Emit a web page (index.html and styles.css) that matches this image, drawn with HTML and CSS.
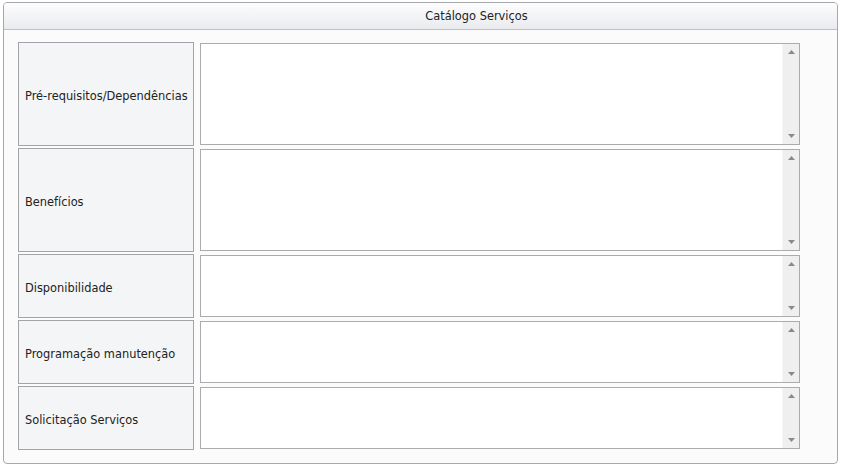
FILE: index.html
```html
<!DOCTYPE html>
<html lang="pt">
<head>
<meta charset="utf-8">
<title>Catálogo Serviços</title>
<link rel="stylesheet" href="styles.css">
</head>
<body>
<div class="panel">
  <div class="panel-header">Catálogo Serviços</div>
  <div class="panel-body">
    <div class="form">
      <div class="label tall">Pré-requisitos/Dependências</div>
      <div class="field tall-field"><div class="area"></div><div class="scroll"><svg class="arr" width="7" height="4" viewBox="0 0 7 4"><path d="M0 4 L3.5 0 L7 4 Z" fill="#8a8a8a"/></svg><svg class="arr" width="7" height="4" viewBox="0 0 7 4"><path d="M0 0 L3.5 4 L7 0 Z" fill="#8a8a8a"/></svg></div></div>

      <div class="label tall">Benefícios</div>
      <div class="field tall-field"><div class="area"></div><div class="scroll"><svg class="arr" width="7" height="4" viewBox="0 0 7 4"><path d="M0 4 L3.5 0 L7 4 Z" fill="#8a8a8a"/></svg><svg class="arr" width="7" height="4" viewBox="0 0 7 4"><path d="M0 0 L3.5 4 L7 0 Z" fill="#8a8a8a"/></svg></div></div>

      <div class="label short">Disponibilidade</div>
      <div class="field short-field"><div class="area"></div><div class="scroll"><svg class="arr" width="7" height="4" viewBox="0 0 7 4"><path d="M0 4 L3.5 0 L7 4 Z" fill="#8a8a8a"/></svg><svg class="arr" width="7" height="4" viewBox="0 0 7 4"><path d="M0 0 L3.5 4 L7 0 Z" fill="#8a8a8a"/></svg></div></div>

      <div class="label short">Programação manutenção</div>
      <div class="field short-field"><div class="area"></div><div class="scroll"><svg class="arr" width="7" height="4" viewBox="0 0 7 4"><path d="M0 4 L3.5 0 L7 4 Z" fill="#8a8a8a"/></svg><svg class="arr" width="7" height="4" viewBox="0 0 7 4"><path d="M0 0 L3.5 4 L7 0 Z" fill="#8a8a8a"/></svg></div></div>

      <div class="label short">Solicitação Serviços</div>
      <div class="field short-field"><div class="area"></div><div class="scroll"><svg class="arr" width="7" height="4" viewBox="0 0 7 4"><path d="M0 4 L3.5 0 L7 4 Z" fill="#8a8a8a"/></svg><svg class="arr" width="7" height="4" viewBox="0 0 7 4"><path d="M0 0 L3.5 4 L7 0 Z" fill="#8a8a8a"/></svg></div></div>
    </div>
  </div>
</div>
</body>
</html>
```
FILE: styles.css
```css
html, body {
  margin: 0;
  padding: 0;
  background: #ffffff;
}
body {
  font-family: "DejaVu Sans", Verdana, sans-serif;
  font-size: 11.4px;
  color: #222222;
}
.panel {
  box-sizing: border-box;
  margin: 2px 0 0 3px;
  width: 835px;
  height: 462px;
  border: 1px solid #a6a8ab;
  border-radius: 4px;
  background: #fbfbfc;
  overflow: hidden;
}
.panel-header {
  box-sizing: border-box;
  height: 27px;
  border-bottom: 1px solid #bcbfc3;
  background: linear-gradient(to bottom, #fdfdfe 0%, #f3f4f6 50%, #e9ebee 100%);
  display: flex;
  align-items: center;
  justify-content: center;
  padding-left: 112px;
  padding-bottom: 1px;
}
.panel-body {
  padding: 12px 0 0 14px;
}
.form {
  display: grid;
  grid-template-columns: 176px 600px;
  column-gap: 6px;
  row-gap: 2px;
}
.label {
  box-sizing: border-box;
  border: 1px solid #a2a4a7;
  background: #f4f5f7;
  padding: 3px 6px 0 6px;
  display: flex;
  align-items: center;
  white-space: nowrap;
}
.tall { height: 104px; }
.short { height: 64px; }
.field {
  box-sizing: border-box;
  margin-top: 1px;
  border: 1px solid #a9abae;
  background: #ffffff;
  display: flex;
}
.tall-field { height: 102px; }
.short-field { height: 62px; }
.area {
  flex: 1;
}
.scroll {
  width: 16px;
  border-left: 1px solid #f6f6f6;
  background: #efefef;
  display: flex;
  flex-direction: column;
  justify-content: space-between;
  align-items: center;
  padding: 6px 0 6px 0;
}
.arr {
  display: block;
}
```
